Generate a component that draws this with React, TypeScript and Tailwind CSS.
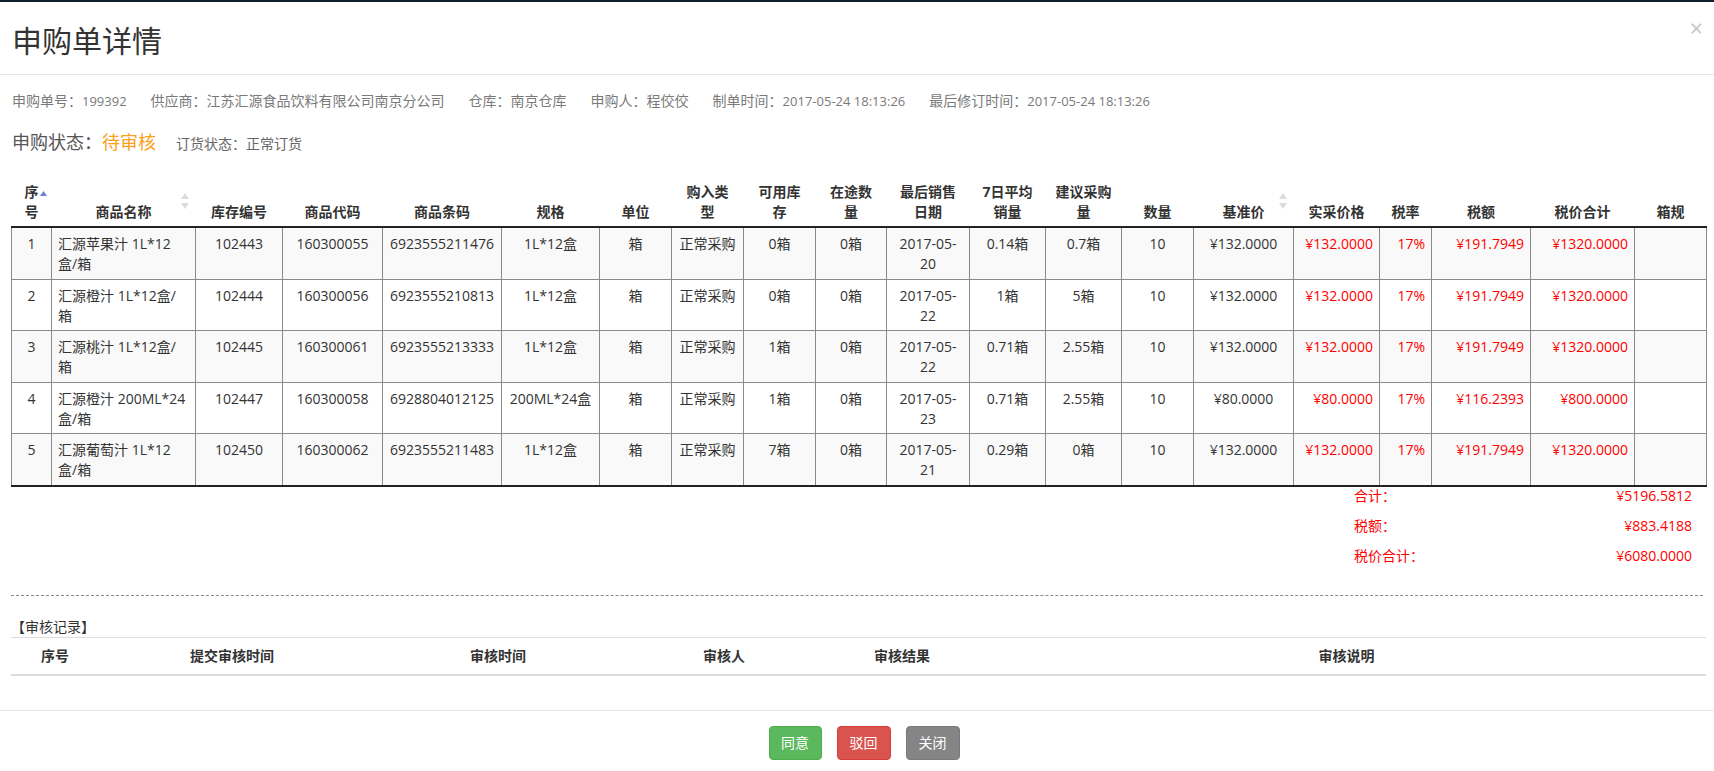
import React from 'react';

type Row = {
  no: number;
  name: [string, string];
  stockNo: string;
  code: string;
  barcode: string;
  spec: string;
  avail: string;
  transit: string;
  date: [string, string];
  avg: string;
  suggest: string;
  base: string;
  real: string;
  tax: string;
  total: string;
};

const rows: Row[] = [
  { no: 1, name: ['汇源苹果汁 1L*12', '盒/箱'], stockNo: '102443', code: '160300055', barcode: '6923555211476', spec: '1L*12盒', avail: '0箱', transit: '0箱', date: ['2017-05-', '20'], avg: '0.14箱', suggest: '0.7箱', base: '¥132.0000', real: '¥132.0000', tax: '¥191.7949', total: '¥1320.0000' },
  { no: 2, name: ['汇源橙汁 1L*12盒/', '箱'], stockNo: '102444', code: '160300056', barcode: '6923555210813', spec: '1L*12盒', avail: '0箱', transit: '0箱', date: ['2017-05-', '22'], avg: '1箱', suggest: '5箱', base: '¥132.0000', real: '¥132.0000', tax: '¥191.7949', total: '¥1320.0000' },
  { no: 3, name: ['汇源桃汁 1L*12盒/', '箱'], stockNo: '102445', code: '160300061', barcode: '6923555213333', spec: '1L*12盒', avail: '1箱', transit: '0箱', date: ['2017-05-', '22'], avg: '0.71箱', suggest: '2.55箱', base: '¥132.0000', real: '¥132.0000', tax: '¥191.7949', total: '¥1320.0000' },
  { no: 4, name: ['汇源橙汁 200ML*24', '盒/箱'], stockNo: '102447', code: '160300058', barcode: '6928804012125', spec: '200ML*24盒', avail: '1箱', transit: '0箱', date: ['2017-05-', '23'], avg: '0.71箱', suggest: '2.55箱', base: '¥80.0000', real: '¥80.0000', tax: '¥116.2393', total: '¥800.0000' },
  { no: 5, name: ['汇源葡萄汁 1L*12', '盒/箱'], stockNo: '102450', code: '160300062', barcode: '6923555211483', spec: '1L*12盒', avail: '7箱', transit: '0箱', date: ['2017-05-', '21'], avg: '0.29箱', suggest: '0箱', base: '¥132.0000', real: '¥132.0000', tax: '¥191.7949', total: '¥1320.0000' },
];

const widths = [40, 144, 87, 100, 119, 98, 72, 72, 72, 71, 83, 76, 76, 72, 100, 86, 52, 99, 104, 72];

function SortBoth() {
  return (
    <svg className="absolute right-[7px] top-[19px]" width="8" height="16" viewBox="0 0 8 16">
      <path d="M4 0 L8 6 L0 6 Z" fill="#dcdcdc" />
      <path d="M4 16 L8 10 L0 10 Z" fill="#dcdcdc" />
    </svg>
  );
}

function Th({ children, sort }: { children: React.ReactNode; sort?: boolean }) {
  return (
    <th className="relative align-bottom text-center font-bold text-[#333] px-[4px] pt-[8px] pb-[4px] leading-[20px] border-b-2 border-[#222]">
      {children}
      {sort && <SortBoth />}
    </th>
  );
}

const td = 'border border-[#8a8a8a] align-top px-[6px] pt-[6px] pb-[4.5px] leading-[20px]';

export default function App() {
  const info: [string, string, boolean][] = [
    ['申购单号', '199392', true],
    ['供应商', '江苏汇源食品饮料有限公司南京分公司', false],
    ['仓库', '南京仓库', false],
    ['申购人', '程佼佼', false],
    ['制单时间', '2017-05-24 18:13:26', true],
    ['最后修订时间', '2017-05-24 18:13:26', true],
  ];

  return (
    <div className="min-h-screen bg-white text-[14px] text-[#333] font-['Open_Sans','Noto_Sans_CJK_SC',sans-serif]">
      <div className="h-[2px] bg-[#0f1e2b]" />

      <div className="flex justify-between h-[73px] border-b border-[#e5e5e5] pl-[12px] pr-[11px]">
        <h4 className="self-start mt-[21px] text-[30px] leading-[36px] text-[#333] font-normal">申购单详情</h4>
        <button className="self-start mt-[15px] text-[23px] font-normal leading-none text-[#c4c4c4]">×</button>
      </div>

      <div className="px-[11px]">
        <div className="flex items-baseline gap-[24px] pt-[16px] leading-[20px] text-[#7a7a7a] pl-[1px]">
          {info.map(([k, v, num]) => (
            <span key={k}>
              {k}：<span className={num ? 'text-[13px]' : ''}>{v}</span>
            </span>
          ))}
        </div>

        <div className="flex items-baseline mt-[18px] pl-[1px]">
          <span className="text-[18px] leading-[26px] text-[#555]">
            申购状态：<span className="text-[#f9a11b]">待审核</span>
          </span>
          <span className="ml-[20px] text-[#666]">订货状态：正常订货</span>
        </div>

        <table className="mt-[19px] table-fixed border-collapse w-[1695px] border-b-2 border-[#222]">
          <colgroup>
            {widths.map((w, i) => (
              <col key={i} style={{ width: w }} />
            ))}
          </colgroup>
          <thead>
            <tr>
              <th className="relative align-bottom text-center font-bold text-[#333] px-[4px] pt-[8px] pb-[4px] leading-[20px] border-b-2 border-[#222]">
                <span className="relative">
                  序
                  <svg className="absolute left-full top-[9px] ml-[1px]" width="7" height="5" viewBox="0 0 7 5">
                    <path d="M3.5 0 L7 5 L0 5 Z" fill="#6b7fe0" />
                  </svg>
                </span>
                <br />号
              </th>
              <Th sort>商品名称</Th>
              <Th>库存编号</Th>
              <Th>商品代码</Th>
              <Th>商品条码</Th>
              <Th>规格</Th>
              <Th>单位</Th>
              <Th>购入类<br />型</Th>
              <Th>可用库<br />存</Th>
              <Th>在途数<br />量</Th>
              <Th>最后销售<br />日期</Th>
              <Th>7日平均<br />销量</Th>
              <Th>建议采购<br />量</Th>
              <Th>数量</Th>
              <Th sort>基准价</Th>
              <Th>实采价格</Th>
              <Th>税率</Th>
              <Th>税额</Th>
              <Th>税价合计</Th>
              <Th>箱规</Th>
            </tr>
          </thead>
          <tbody>
            {rows.map((r) => (
              <tr key={r.no} className={r.no % 2 === 1 ? 'bg-[#f9f9f9]' : 'bg-white'}>
                <td className={`${td} text-center`}>{r.no}</td>
                <td className={`${td} text-left`}>
                  {r.name[0]}
                  <br />
                  {r.name[1]}
                </td>
                <td className={`${td} text-center`}>{r.stockNo}</td>
                <td className={`${td} text-center`}>{r.code}</td>
                <td className={`${td} text-center`}>{r.barcode}</td>
                <td className={`${td} text-center`}>{r.spec}</td>
                <td className={`${td} text-center`}>箱</td>
                <td className={`${td} text-center`}>正常采购</td>
                <td className={`${td} text-center`}>{r.avail}</td>
                <td className={`${td} text-center`}>{r.transit}</td>
                <td className={`${td} text-center`}>
                  {r.date[0]}
                  <br />
                  {r.date[1]}
                </td>
                <td className={`${td} text-center`}>{r.avg}</td>
                <td className={`${td} text-center`}>{r.suggest}</td>
                <td className={`${td} text-center`}>10</td>
                <td className={`${td} text-center`}>{r.base}</td>
                <td className={`${td} text-right text-[#f00]`}>{r.real}</td>
                <td className={`${td} text-right text-[#f00]`}>17%</td>
                <td className={`${td} text-right text-[#f00]`}>{r.tax}</td>
                <td className={`${td} text-right text-[#f00]`}>{r.total}</td>
                <td className={td}></td>
              </tr>
            ))}
          </tbody>
        </table>

        <div className="-mt-[1px] ml-auto mr-[11px] w-[338px] flex flex-col gap-[10px] leading-[20px] text-[#f00]">
          <div className="flex justify-between">
            <span>合计：</span>
            <span>¥5196.5812</span>
          </div>
          <div className="flex justify-between">
            <span>税额：</span>
            <span>¥883.4188</span>
          </div>
          <div className="flex justify-between">
            <span>税价合计：</span>
            <span>¥6080.0000</span>
          </div>
        </div>

        <div className="mt-[29px] border-t border-dashed border-[#888]" />

        <div className="mt-[21px] leading-[20px] text-[#333]">【审核记录】</div>

        <table className="table-fixed border-collapse w-[1695px] border-t border-[#ddd] mb-[34px]">
          <colgroup>
            <col style={{ width: 88 }} />
            <col style={{ width: 266 }} />
            <col style={{ width: 266 }} />
            <col style={{ width: 186 }} />
            <col style={{ width: 170 }} />
            <col />
          </colgroup>
          <thead>
            <tr>
              {['序号', '提交审核时间', '审核时间', '审核人', '审核结果', '审核说明'].map((h) => (
                <th key={h} className="text-center font-bold text-[#333] py-[8px] leading-[20px] border-b-2 border-[#ddd]">
                  {h}
                </th>
              ))}
            </tr>
          </thead>
        </table>
      </div>

      <div className="border-t border-[#e5e5e5] flex justify-center gap-[15px] pt-[15px] pl-[14px]">
        <button className="w-[53px] h-[34px] rounded-[4px] bg-[#5cb85c] border border-[#4cae4c] text-white">同意</button>
        <button className="w-[54px] h-[34px] rounded-[4px] bg-[#d9534f] border border-[#d43f3a] text-white">驳回</button>
        <button className="w-[54px] h-[34px] rounded-[4px] bg-[#858585] border border-[#7a7a7a] text-white">关闭</button>
      </div>
    </div>
  );
}
